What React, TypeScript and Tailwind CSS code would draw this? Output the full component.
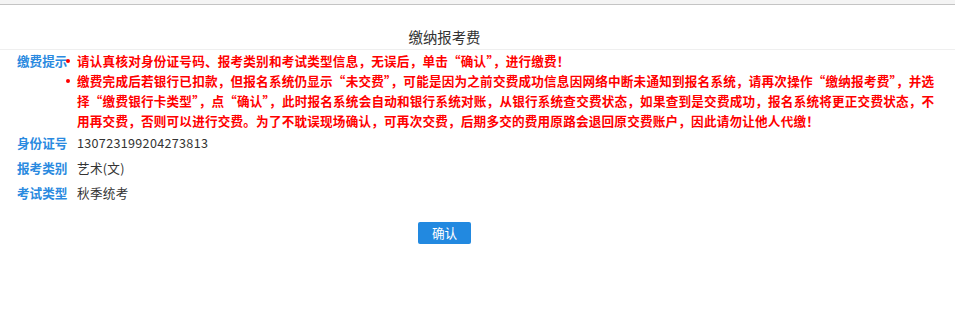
import React from 'react';

const font = { fontFamily: '"Microsoft YaHei", "Noto Sans CJK SC", sans-serif' };

const tips = [
  '请认真核对身份证号码、报考类别和考试类型信息，无误后，单击“确认”，进行缴费！',
  '缴费完成后若银行已扣款，但报名系统仍显示“未交费”，可能是因为之前交费成功信息因网络中断未通知到报名系统，请再次操作“缴纳报考费”，并选择“缴费银行卡类型”，点“确认”，此时报名系统会自动和银行系统对账，从银行系统查交费状态，如果查到是交费成功，报名系统将更正交费状态，不用再交费，否则可以进行交费。为了不耽误现场确认，可再次交费，后期多交的费用原路会退回原交费账户，因此请勿让他人代缴！',
];

const rows = [
  { label: '身份证号', value: '130723199204273813' },
  { label: '报考类别', value: '艺术(文)' },
  { label: '考试类型', value: '秋季统考' },
];

export default function App() {
  return (
    <div className="min-h-[309px] w-[955px] bg-white text-[#333]" style={font}>
      <div className="h-[5px] bg-[#f4f4f4] border-b border-[#c4c4c4]" />

      <div className="h-[45px] border-b border-[#efefef]">
        <div className="w-[889px] pt-[22px] text-center text-[14.4px] leading-[20px] text-[#333]">
          缴纳报考费
        </div>
      </div>

      <div className="pl-[17px] pr-[10px]">
        <div className="flex pt-[1px]">
          <div className="w-[46px] shrink-0 whitespace-nowrap text-[12.6px] font-bold leading-[20px] text-[#2a8ae0]">
            缴费提示
          </div>
          <ul className="w-[873px] text-[12.6px] font-bold leading-[20px] tracking-[0.2px] text-[#ff0000]">
            {tips.map((tip) => (
              <li key={tip.slice(0, 8)} className="flex">
                <span className="w-[14px] shrink-0 pl-[2.5px] pt-[8px]">
                  <span className="block h-[4px] w-[4px] rounded-full bg-[#ff0000]" />
                </span>
                <span>{tip}</span>
              </li>
            ))}
          </ul>
        </div>

        <div className="mt-[0.5px]">
          {rows.map((row) => (
            <div key={row.label} className="flex h-[24.7px] items-center text-[12.6px]">
              <span className="w-[60px] shrink-0 font-bold text-[#2a8ae0]">{row.label}</span>
              <span className="tracking-[0.3px] text-[#333]">{row.value}</span>
            </div>
          ))}
        </div>
      </div>

      <div className="mt-[16px] flex w-[889px] justify-center">
        <button
          type="button"
          className="h-[22px] w-[53px] rounded-[2px] bg-[#2289e0] text-[12.6px] leading-[22px] text-white"
        >
          确认
        </button>
      </div>
    </div>
  );
}
